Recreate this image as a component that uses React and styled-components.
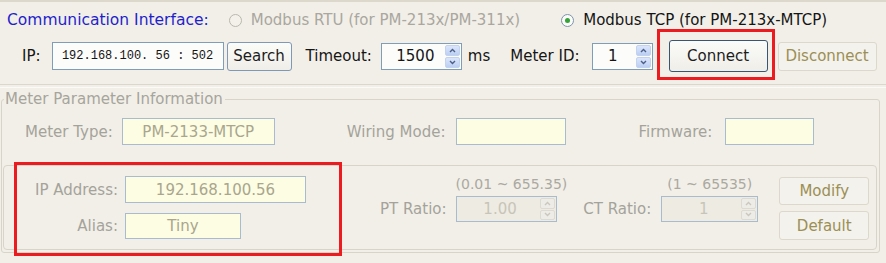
import React from 'react';
import styled, { createGlobalStyle } from 'styled-components';

const GlobalStyle = createGlobalStyle`
  html, body { margin: 0; padding: 0; background: #f2efe8; }
  body { font-family: "DejaVu Sans", Verdana, sans-serif; }
`;

const Page = styled.div`
  position: relative;
  width: 886px;
  height: 263px;
  box-sizing: border-box;
  background: #f2efe8;
  border-top: 2px solid #ddd8cc;
  overflow: hidden;
  font-size: 15px;
  color: #1b1b1b;
`;

const InterfaceRow = styled.div`
  display: flex;
  align-items: center;
  height: 36px;
  padding-left: 7px;
`;

const Title = styled.span`
  color: #1f1fcc;
  font-size: 15.5px;
`;

const RadioOption = styled.label`
  display: flex;
  align-items: center;
  gap: 9px;
  margin-left: ${p => p.$ml}px;
  color: ${p => (p.$disabled ? '#a9a79f' : '#151515')};
`;

const RadioDot = styled.span`
  position: relative;
  width: 11px;
  height: 11px;
  border-radius: 50%;
  border: 1px solid ${p => (p.$disabled ? '#b9b8ae' : '#7d94ad')};
  background: ${p => (p.$disabled ? '#f3f1ea' : '#fbfbf8')};

  &::after {
    content: '';
    display: ${p => (p.$checked ? 'block' : 'none')};
    position: absolute;
    left: 3px;
    top: 3px;
    width: 5px;
    height: 5px;
    border-radius: 50%;
    background: #35a33a;
  }
`;

const ConnectionRow = styled.div`
  display: flex;
  align-items: center;
  height: 36px;
  padding-left: 22px;
`;

const Label = styled.span`
  margin-left: ${p => p.$ml || 0}px;
  color: ${p => (p.$disabled ? '#a4a39b' : '#151515')};
  white-space: nowrap;
`;

const Field = styled.div`
  position: relative;
  box-sizing: border-box;
  display: flex;
  align-items: center;
  justify-content: ${p => p.$align || 'center'};
  width: ${p => p.$w}px;
  height: ${p => p.$h || 27}px;
  margin-left: ${p => p.$ml || 0}px;
  padding: 0 ${p => (p.$spin ? 18 : 6)}px 0 6px;
  border: 1px solid ${p => (p.$disabled ? '#a9bccf' : '#7f9db9')};
  background: ${p => p.$bg || '#fcfcfa'};
  color: ${p => p.$color || '#151515'};
  font-size: ${p => p.$fs || 15}px;
  font-family: ${p => (p.$mono ? '"Liberation Mono", monospace' : 'inherit')};
  white-space: pre;
`;

const Spinner = styled.div`
  position: absolute;
  right: 1px;
  top: 1px;
  bottom: 1px;
  width: 15px;
  display: flex;
  flex-direction: column;
  gap: 1px;
`;

const SpinHalf = styled.div`
  flex: 1;
  display: flex;
  align-items: center;
  justify-content: center;
  border-radius: 2px;
  background: ${p => (p.$disabled ? '#eeece6' : 'linear-gradient(#dbe6fb, #bccff3)')};
  border: 1px solid ${p => (p.$disabled ? '#dcdad2' : '#c3d2ee')};
`;

const Button = styled.div`
  box-sizing: border-box;
  display: flex;
  align-items: center;
  justify-content: center;
  width: ${p => p.$w}px;
  height: ${p => p.$h || 29}px;
  margin-left: ${p => p.$ml || 0}px;
  border-radius: 3px;
  border: 1px solid ${p => (p.$disabled ? '#dcd8cc' : p.$strong ? '#3a5572' : '#7f98b5')};
  background: ${p => (p.$disabled ? '#f4f2ec' : 'linear-gradient(#fbfbf9, #efeee8)')};
  color: ${p => (p.$disabled ? '#9b8f55' : '#1c1c1c')};
  font-size: 15px;
`;

const Divider = styled.div`
  margin-top: 10px;
  height: 2px;
  border-top: 1px solid #dcd7cc;
  border-bottom: 1px solid #fbfaf7;
`;

const GroupBox = styled.fieldset`
  margin: 2px 6px 0 1px;
  padding: 0 0 2px;
  border: 1px solid #d8d4ca;
  border-radius: 3px;
`;

const Legend = styled.legend`
  margin-left: 2px;
  padding: 0 2px 0 1px;
  color: #a6a59d;
  font-size: 15px;
`;

const MeterRow = styled.div`
  display: flex;
  align-items: center;
  margin-top: 10px;
  padding-left: 23px;
`;

const InnerBox = styled.div`
  display: flex;
  margin: 20px 2px 0 1px;
  height: 85px;
  box-sizing: border-box;
  padding-top: 10px;
  border: 1px solid #d8d4ca;
  border-radius: 4px;
`;

const AddressGrid = styled.div`
  display: grid;
  grid-template-columns: 114px auto;
  column-gap: 7px;
  row-gap: 10px;
  align-content: start;
  align-items: center;
  justify-items: start;

  & > span { justify-self: end; }
`;

const RatioGroup = styled.div`
  display: grid;
  grid-template-columns: auto auto;
  column-gap: ${p => p.$gap}px;
  row-gap: 4px;
  margin-left: ${p => p.$ml}px;
  align-content: start;
  align-items: center;
`;

const RangeText = styled.span`
  grid-column: 2;
  text-align: center;
  line-height: 16px;
  font-size: 14px;
  color: #aaa9a1;
`;

const ButtonColumn = styled.div`
  display: flex;
  flex-direction: column;
  gap: 6px;
  margin-left: ${p => p.$ml}px;
  margin-top: 1px;
`;

const Highlight = styled.div`
  position: absolute;
  left: ${p => p.$x}px;
  top: ${p => p.$y}px;
  width: ${p => p.$w}px;
  height: ${p => p.$h}px;
  box-sizing: border-box;
  border: 3px solid #ec1b1f;
  pointer-events: none;
`;

const Arrow = ({ up, color }) => (
  <svg width="7" height="5" viewBox="0 0 7 5">
    <path d={up ? 'M1 4 L3.5 1.5 L6 4' : 'M1 1 L3.5 3.5 L6 1'} fill="none" stroke={color} strokeWidth="1.4" />
  </svg>
);

const Spin = ({ disabled }) => {
  const c = disabled ? '#c9c7be' : '#4c5f86';
  return (
    <Spinner>
      <SpinHalf $disabled={disabled}><Arrow up color={c} /></SpinHalf>
      <SpinHalf $disabled={disabled}><Arrow color={c} /></SpinHalf>
    </Spinner>
  );
};

const yellow = '#fdfde4';
const greyText = '#a9a68d';

export default function App() {
  return (
    <>
      <GlobalStyle />
      <Page>
        <InterfaceRow>
          <Title>Communication Interface:</Title>
          <RadioOption $ml={20} $disabled>
            <RadioDot $disabled />
            Modbus RTU (for PM-213x/PM-311x)
          </RadioOption>
          <RadioOption $ml={41}>
            <RadioDot $checked />
            Modbus TCP (for PM-213x-MTCP)
          </RadioOption>
        </InterfaceRow>

        <ConnectionRow>
          <Label>IP:</Label>
          <Field $w={172} $h={28} $ml={11} $mono $fs={12}>192.168.100. 56 : 502</Field>
          <Button $w={65} $ml={3}>Search</Button>
          <Label $ml={14}>Timeout:</Label>
          <Field $w={81} $ml={9} $spin>1500<Spin /></Field>
          <Label $ml={6}>ms</Label>
          <Label $ml={20}>Meter ID:</Label>
          <Field $w={61} $ml={12} $spin $align="flex-start">  1<Spin /></Field>
          <Button $w={99} $h={32} $ml={16} $strong>Connect</Button>
          <Button $w={99} $ml={10} $disabled>Disconnect</Button>
        </ConnectionRow>

        <Divider />

        <GroupBox>
          <Legend>Meter Parameter Information</Legend>
          <MeterRow>
            <Label $disabled>Meter Type:</Label>
            <Field $w={153} $ml={9} $bg={yellow} $color={greyText} $disabled>PM-2133-MTCP</Field>
            <Label $ml={72} $disabled>Wiring Mode:</Label>
            <Field $w={110} $ml={11} $bg={yellow} $disabled />
            <Label $ml={72} $disabled>Firmware:</Label>
            <Field $w={89} $ml={13} $bg={yellow} $disabled />
          </MeterRow>

          <InnerBox>
            <AddressGrid>
              <Label $disabled>IP Address:</Label>
              <Field $w={181} $bg={yellow} $color={greyText} $disabled>192.168.100.56</Field>
              <Label $disabled>Alias:</Label>
              <Field $w={116} $h={26} $bg={yellow} $color={greyText} $disabled>Tiny</Field>
            </AddressGrid>

            <RatioGroup $ml={74} $gap={9}>
              <RangeText>(0.01 ~ 655.35)</RangeText>
              <Label $disabled>PT Ratio:</Label>
              <Field $w={101} $h={26} $bg="#eeebe3" $color="#c8c5b8" $disabled $spin>1.00<Spin disabled /></Field>
            </RatioGroup>

            <RatioGroup $ml={16} $gap={10}>
              <RangeText>(1 ~ 65535)</RangeText>
              <Label $disabled>CT Ratio:</Label>
              <Field $w={97} $h={26} $bg="#eeebe3" $color="#c8c5b8" $disabled $spin>1<Spin disabled /></Field>
            </RatioGroup>

            <ButtonColumn $ml={21}>
              <Button $w={90} $h={28} $disabled>Modify</Button>
              <Button $w={90} $h={29} $disabled>Default</Button>
            </ButtonColumn>
          </InnerBox>
        </GroupBox>

        <Highlight $x={657} $y={27} $w={118} $h={51} />
        <Highlight $x={14} $y={160} $w={328} $h={94} />
      </Page>
    </>
  );
}
